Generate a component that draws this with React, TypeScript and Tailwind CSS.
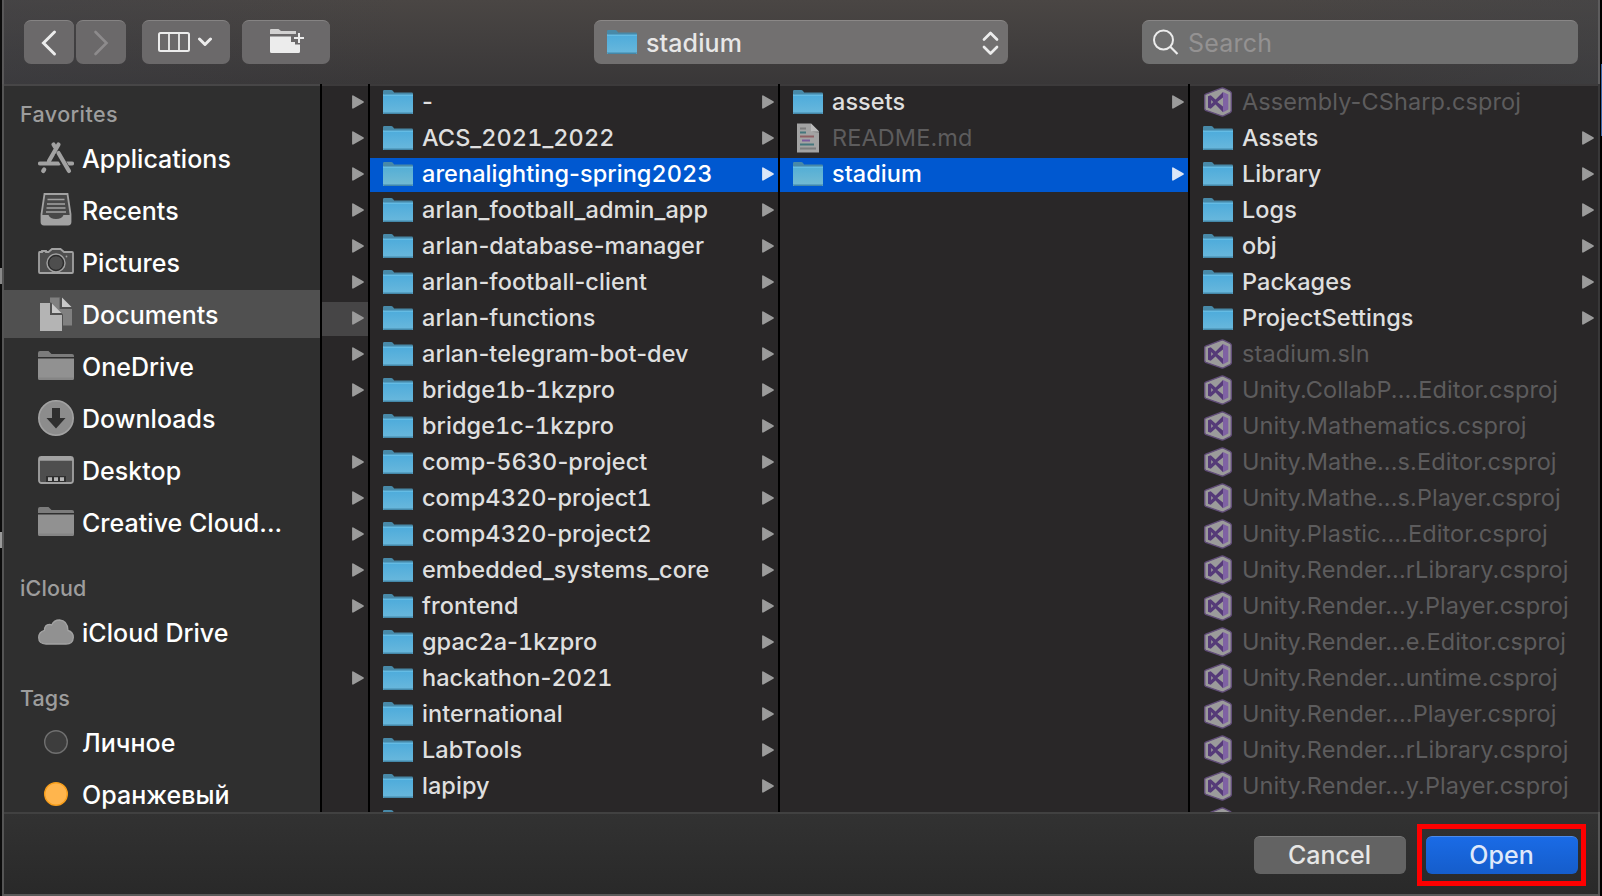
import React from "react";

const FOLDERS = [
  "-", "ACS_2021_2022", "arenalighting-spring2023", "arlan_football_admin_app", "arlan-database-manager",
  "arlan-football-client", "arlan-functions", "arlan-telegram-bot-dev", "bridge1b-1kzpro", "bridge1c-1kzpro",
  "comp-5630-project", "comp4320-project1", "comp4320-project2", "embedded_systems_core", "frontend",
  "gpac2a-1kzpro", "hackathon-2021", "international", "LabTools", "lapipy", "",
];

type Kind = "folder" | "doc" | "vs";
type Entry = { name: string; kind: Kind };

const STADIUM: Entry[] = [
  { name: "assets", kind: "folder" },
  { name: "README.md", kind: "doc" },
  { name: "stadium", kind: "folder" },
];

const PROJECT: Entry[] = [
  { name: "Assembly-CSharp.csproj", kind: "vs" },
  { name: "Assets", kind: "folder" },
  { name: "Library", kind: "folder" },
  { name: "Logs", kind: "folder" },
  { name: "obj", kind: "folder" },
  { name: "Packages", kind: "folder" },
  { name: "ProjectSettings", kind: "folder" },
  { name: "stadium.sln", kind: "vs" },
  { name: "Unity.CollabP....Editor.csproj", kind: "vs" },
  { name: "Unity.Mathematics.csproj", kind: "vs" },
  { name: "Unity.Mathe...s.Editor.csproj", kind: "vs" },
  { name: "Unity.Mathe...s.Player.csproj", kind: "vs" },
  { name: "Unity.Plastic....Editor.csproj", kind: "vs" },
  { name: "Unity.Render...rLibrary.csproj", kind: "vs" },
  { name: "Unity.Render...y.Player.csproj", kind: "vs" },
  { name: "Unity.Render...e.Editor.csproj", kind: "vs" },
  { name: "Unity.Render...untime.csproj", kind: "vs" },
  { name: "Unity.Render....Player.csproj", kind: "vs" },
  { name: "Unity.Render...rLibrary.csproj", kind: "vs" },
  { name: "Unity.Render...y.Player.csproj", kind: "vs" },
  { name: "Unity.Render...ditor.csproj", kind: "vs" },
];

const NARROW = [1, 1, 1, 1, 1, 1, 1, 1, 1, 0, 1, 1, 1, 1, 1, 0, 1, 0, 0, 0, 0];

function Defs() {
  return (
    <svg className="absolute h-0 w-0" aria-hidden="true">
      <defs>
        <linearGradient id="front" x1="0" y1="0" x2="0" y2="1">
          <stop offset="0" stopColor="#4dabdb" />
          <stop offset="1" stopColor="#6ab8dc" />
        </linearGradient>
        <linearGradient id="frontSel" x1="0" y1="0" x2="0" y2="1">
          <stop offset="0" stopColor="#53aed6" />
          <stop offset="1" stopColor="#74bbd2" />
        </linearGradient>
      </defs>
    </svg>
  );
}

function Folder({ selected = false }: { selected?: boolean }) {
  return (
    <svg className="h-[26px] w-[30px] shrink-0" viewBox="0 0 30 26">
      <path d="M0 1.2Q0 0 1.2 0H8.2Q9.2 0 9.8 .8L11.2 2.6H28.8Q30 2.6 30 3.8V8H0Z" fill="#4889a8" />
      <path d="M.8 4H29.8V5H.8Z" fill="#33657e" />
      <path d="M0 4.6H30V22.9Q30 24 28.9 24H1.1Q0 24 0 22.9Z" fill={selected ? "url(#frontSel)" : "url(#front)"} />
      <path d="M0 4.6H30V5.6H0Z" fill="#74c6ea" />
      <path d="M0 22H30V22.9Q30 24 28.9 24H1.1Q0 24 0 22.9Z" fill="#559fc2" />
      <path d="M.6 23.3H29.4L28.9 24H1.1Z" fill="#3f7f9f" />
    </svg>
  );
}

function DocIcon() {
  return (
    <svg className="mb-0.5 ml-1 mr-1 h-[30px] w-[22px] shrink-0" viewBox="0 0 22 30">
      <path d="M0 .5H14L22 8.500V29.500H0Z" fill="#a3a3a3" />
      <path d="M14 .5 22 8.500H14Z" fill="#bcbcbc" />
      <path d="M14 8.500H22V10Z" fill="#858585" />
      <g strokeWidth="2" fill="none">
        <path d="M3 5.500H9M3 25.500H19" stroke="#7d7d7d" />
        <path d="M3 9.500H9M3 21.500H17" stroke="#45767c" />
        <path d="M3 13.500H17" stroke="#8e5f63" />
        <path d="M5 17.500H13" stroke="#7a5c9c" />
      </g>
    </svg>
  );
}

function VsIcon() {
  return (
    <svg className="mb-0.5 ml-px mr-px h-[30px] w-[28px] shrink-0" viewBox="0 0 28 30">
      <path d="M1.800 7.200 17.500 1.200Q18.700.8 19.900 1.300L26 4.300Q27.300 5 27.300 6.400V23.600Q27.300 25 26 25.700L19.900 28.700Q18.700 29.200 17.500 28.800L1.800 23.300Q.7 22.800 .7 21.600V8.700Q.7 7.600 1.800 7.200Z" fill="#9b9b9b" stroke="#634f7b" strokeWidth="1.400" />
      <path d="M4 9.200 6 8.400Q6.700 8.200 7.300 8.800L19 19.300V25.200L7.200 12.900V16.900L19 5V10.700L7.300 21.300Q6.700 21.800 6 21.600L4 20.800Z" fill="#553a78" />
      <path d="M19 5 24.300 7.600V22.600L19 25.200Z" fill="#7f62a3" />
      <path d="M13.300 15 19 10.600V19.400Z" fill="#9b9b9b" />
    </svg>
  );
}

function Arrow({ selected = false }: { selected?: boolean }) {
  return (
    <svg className="mb-0.5 h-[14px] w-[12px] shrink-0" viewBox="0 0 12 14">
      <path d="M.9 1.100 11 7 .9 12.900Z" fill={selected ? "#dbe6f8" : "#9b9b9b"} stroke={selected ? "#dbe6f8" : "#9b9b9b"} strokeWidth="1.600" strokeLinejoin="round" />
    </svg>
  );
}

function FileName({ name }: { name: string }) {
  return (
    <>
      {name.split(/(\d+)/).map((part, i) => (i % 2 ? <span key={i} className="tabular-nums">{part}</span> : part))}
    </>
  );
}

function Row({ entry, selected = false }: { entry: Entry; selected?: boolean }) {
  const isFolder = entry.kind === "folder";
  return (
    <div className={`flex h-[34px] shrink-0 items-center pl-[13px] pr-1 ${selected ? "bg-[#0058d0]" : ""}`}>
      {isFolder && <Folder selected={selected} />}
      {entry.kind === "doc" && <DocIcon />}
      {entry.kind === "vs" && <VsIcon />}
      <span className={`ml-[9px] flex-1 whitespace-pre pb-0.5 text-[23.5px] leading-[30px] ${selected ? "font-medium tracking-[0.05px] text-white" : isFolder ? "font-[450] tracking-[0.05px] text-[#dfdfdf]" : "tracking-[0.1px] text-[#5d5c5d]"}`}>
        <FileName name={entry.name} />
      </span>
      {isFolder && <Arrow selected={selected} />}
    </div>
  );
}

function SideIcon({ name }: { name: string }) {
  const c = "#a2a2a2";
  return (
    <svg className="h-[36px] w-[36px] shrink-0" viewBox="0 0 36 36">
      {name === "Applications" && (
        <g stroke={c} strokeWidth="4.200" strokeLinecap="round" fill="none">
          <path d="M20.500 4.500 11 21" />
          <path d="M2 23.500H21" />
          <path d="M28 23.500H34" />
          <path d="M6.200 29.500 5.200 31" />
          <path d="M15.500 4.500 17 7" />
          <path d="M19.500 13 29 29" stroke="#2f2f2f" strokeWidth="6.500" strokeLinecap="butt" />
          <path d="M20.500 13 31 31" />
        </g>
      )}
      {name === "Recents" && (
        <g>
          <path d="M6.500 2H29.500L32.500 22V30Q32.500 32.500 30 32.500H6Q3.500 32.500 3.500 30V22Z" fill="#484848" stroke={c} strokeWidth="1.800" />
          <path d="M9.500 7.500H26.500M9 12H27M8.500 16H27.500M8 20H28" stroke={c} strokeWidth="1.700" />
          <path d="M3.500 23H10.500Q12 27 18 27T25.500 23H32.500V30Q32.500 32.500 30 32.500H6Q3.500 32.500 3.500 30Z" fill={c} />
        </g>
      )}
      {name === "Pictures" && (
        <g>
          <path d="M1.500 8H4V7H8V8H10.500L14 5H22.500L26 8H34Q35 8 35 9V28Q35 29 34 29H2Q1 29 1 28V9Q1 8 1.500 8Z" fill="#4e4e4e" stroke={c} strokeWidth="1.800" />
          <circle cx="18" cy="19" r="9" fill="#383838" stroke={c} strokeWidth="1.400" />
          <circle cx="18" cy="19" r="7.300" fill="#4e4e4e" stroke="#242424" strokeWidth=".9" />
          <circle cx="28.500" cy="12.500" r=".9" fill={c} />
        </g>
      )}
      {name === "Documents" && (
        <g>
          <path d="M12 1.500H22.500V11H34V29.500H12Z" fill="#808080" />
          <path d="M24 1.500 34 11.500H24Z" fill="#c9c9c9" />
          <path d="M22.500 1.500V12H34" fill="none" stroke="#505050" strokeWidth="1.800" />
          <path d="M1 6.500H13L25 18.500V36H1Z" fill="#505050" />
          <path d="M2 7H12V19H24V35H2Z" fill="#b4b4b4" />
          <path d="M14 7.500 23.500 17H14Z" fill="#c9c9c9" />
        </g>
      )}
      {name === "Folder" && (
        <g>
          <path d="M0 5Q0 3 2 3H10.500L13.500 6H34Q36 6 36 8V9H0Z" fill="#7c7c7c" />
          <path d="M0 10.500H36V30Q36 32 34 32H2Q0 32 0 30Z" fill="#919191" />
          <path d="M0 29.500H36V30Q36 32 34 32H2Q0 32 0 30Z" fill="#858585" />
        </g>
      )}
      {name === "Downloads" && (
        <g>
          <circle cx="18" cy="18" r="17.200" fill="#8c8c8c" stroke={c} strokeWidth="1.600" />
          <path d="M14 8H22V18H27.500L18 28.500 8.500 18H14Z" fill="#2f2f2f" />
        </g>
      )}
      {name === "Desktop" && (
        <g>
          <rect x="1" y="5" width="34" height="26" rx="2.500" fill="#4e4e4e" stroke={c} strokeWidth="1.800" />
          <path d="M1 5H35V8.800H1Z" fill={c} />
          <path d="M8 24H28V30H8Z" fill="#2f2f2f" />
          <path d="M10 25.200H14V29H10ZM16 25.200H20V29H16ZM22 25.200H26V29H22Z" fill="#b5b5b5" />
        </g>
      )}
      {name === "Cloud" && (
        <path d="M8 30Q.7 30 .7 23.500 .7 18 6.500 16.300 6.500 10.500 11.500 10.300 13 10.300 13.700 11 16 6 21.500 6 29.500 6.500 30 16.500 35.300 18 35.300 23.500 35 30 28 30Z" fill="#919191" stroke={c} strokeWidth="1.300" />
      )}
      {name === "Gray" && <circle cx="18" cy="18" r="11.300" fill="#3d3d3d" stroke="#707070" strokeWidth="1.400" />}
      {name === "Orange" && <circle cx="18" cy="18" r="11.300" fill="#ffb54d" stroke="#f79e1b" strokeWidth="1.400" />}
    </svg>
  );
}

function SideItem({ icon, label, selected = false }: { icon: string; label: string; selected?: boolean }) {
  return (
    <div className={`flex h-12 shrink-0 items-center pl-[34px] ${selected ? "bg-[#505050]" : ""}`}>
      <SideIcon name={icon} />
      <span className="ml-[8px] whitespace-nowrap pt-[2px] text-[25px] font-medium leading-[44px] tracking-[0.03px] text-white">{label}</span>
    </div>
  );
}

const toolButton = "flex h-[44px] items-center justify-center rounded-[7px] border-t border-[#858383] bg-[#6b696a]";
const sectionTitle = "h-[62px] shrink-0 pl-4 pt-[22px] text-[21.5px] font-medium leading-[40px] tracking-[0.1px] text-[#9d9d9d]";

export default function App() {
  return (
    <div className="flex h-[896px] w-[1602px] overflow-hidden bg-black font-['Inter','Noto_Sans',sans-serif]">
      <Defs />
      <div className="flex w-0.5 shrink-0 flex-col bg-[#0c0c0c]">
        <div className="h-[268px]" />
        <div className="h-4 bg-[#8a8a8a]" />
        <div className="h-[248px]" />
        <div className="h-4 bg-[#9a9a9a]" />
      </div>
      <div className="flex w-[1598px] shrink-0 flex-col border-b-2 border-[#5a5959] bg-[#2f2f2f]">
        <header className="flex h-[84px] shrink-0 items-start border-l-2 border-r-2 border-l-[#595859] border-r-[#5d5c5d] bg-[linear-gradient(90deg,rgba(62,64,70,0.4),rgba(62,64,70,0)_25%,rgba(62,64,70,0)_80%,rgba(66,68,72,0.4)),linear-gradient(#4a4644,#393738)] pl-5 pt-5">
          <button className={`${toolButton} w-[50px] pr-px`}>
            <svg className="h-7 w-4" viewBox="0 0 16 28"><path d="M13.500 3 2.500 14 13.500 25" fill="none" stroke="#ececec" strokeWidth="3" strokeLinecap="round" /></svg>
          </button>
          <button className={`${toolButton} ml-0.5 w-[50px]`}>
            <svg className="h-7 w-4" viewBox="0 0 16 28"><path d="M2.500 3 13.500 14 2.500 25" fill="none" stroke="#8d8b8c" strokeWidth="2.600" strokeLinecap="round" /></svg>
          </button>
          <button className={`${toolButton} ml-4 w-[88px] gap-2 pb-px pr-0.5`}>
            <svg className="h-5 w-8" viewBox="0 0 32 20"><rect x="1" y="1" width="30" height="18" rx="1.500" fill="none" stroke="#ececec" strokeWidth="2" /><path d="M11 1V19M21 1V19" stroke="#ececec" strokeWidth="1.800" /></svg>
            <svg className="h-[10px] w-[14px]" viewBox="0 0 14 10"><path d="M1.500 2 7 7.500 12.500 2" fill="none" stroke="#ececec" strokeWidth="3" strokeLinecap="round" strokeLinejoin="round" /></svg>
          </button>
          <button className={`${toolButton} ml-3 w-[88px] pl-0.5`}>
            <svg className="mb-1 h-[26px] w-9" viewBox="0 0 36 26">
              <path d="M1 2Q1 1 2 1H9.500L12 3H27V6H1Z" fill="#d2d1d1" />
              <path d="M1 8.500H22V14H26V16.500H31V23.500Q31 25 29.500 25H2.500Q1 25 1 23.500Z" fill="#ececec" />
              <path d="M24.500 10H35M30 4.500V15.500" stroke="#6b696a" strokeWidth="5" />
              <path d="M25 10H35M30 5V15" stroke="#ececec" strokeWidth="2" />
            </svg>
          </button>
          <div className="ml-[264px] flex h-[44px] w-[414px] items-center rounded-[7px] border-t border-[#8b8887] bg-[#727070] pl-[13px] pr-[9px]">
            <Folder />
            <span className="ml-[9px] flex-1 text-[25px] font-medium leading-[40px] tracking-[0.1px] text-[#e8e7e7]">stadium</span>
            <svg className="h-[26px] w-[17px]" viewBox="0 0 17 26"><path d="M2 9.500 8.500 3 15 9.500M2 17 8.500 23.500 15 17" fill="none" stroke="#ececec" strokeWidth="2.700" strokeLinecap="round" strokeLinejoin="round" /></svg>
          </div>
          <div className="ml-[134px] flex h-[44px] w-[436px] items-center rounded-[7px] border-t border-[#888686] bg-[#707070] pl-[11px]">
            <svg className="h-[27px] w-[27px]" viewBox="0 0 27 27"><circle cx="10.500" cy="11" r="9.500" fill="none" stroke="#ececec" strokeWidth="2" /><path d="M17.300 17.800 24.500 25" stroke="#ececec" strokeWidth="2.200" /></svg>
            <span className="ml-2 text-[25px] leading-[40px] tracking-[0.2px] text-[#949292]">Search</span>
          </div>
        </header>

        <main className="flex h-[728px] shrink-0 overflow-hidden bg-[#292728]">
          <nav className="flex w-[318px] shrink-0 flex-col overflow-hidden border-l-2 border-[#555555] bg-[#2f2f2f]">
            <div className="h-0.5 shrink-0 bg-[#474647]" />
            <h2 className="h-12 shrink-0 pl-4 pt-2 text-[21.5px] font-medium leading-[40px] tracking-[0.4px] text-[#9d9d9d]">Favorites</h2>
            <div className="flex shrink-0 flex-col gap-1">
              <SideItem icon="Applications" label="Applications" />
              <SideItem icon="Recents" label="Recents" />
              <SideItem icon="Pictures" label="Pictures" />
              <SideItem icon="Documents" label="Documents" selected />
              <SideItem icon="Folder" label="OneDrive" />
              <SideItem icon="Downloads" label="Downloads" />
              <SideItem icon="Desktop" label="Desktop" />
              <SideItem icon="Folder" label="Creative Cloud..." />
            </div>
            <h2 className={sectionTitle}>iCloud</h2>
            <SideItem icon="Cloud" label="iCloud Drive" />
            <h2 className={sectionTitle}>Tags</h2>
            <div className="flex shrink-0 flex-col gap-1">
              <SideItem icon="Gray" label="Личное" />
              <SideItem icon="Orange" label="Оранжевый" />
            </div>
          </nav>
          <div className="w-[50px] shrink-0 border-x-2 border-black">
            <div className="h-0.5 bg-[#3c3a3b]" />
            <div className="flex flex-col gap-0.5">
              {NARROW.map((has, i) => (
                <div key={i} className={`flex h-[34px] shrink-0 items-center justify-end pr-1 ${i === 6 ? "bg-[#464546]" : ""}`}>
                  {has ? <Arrow /> : null}
                </div>
              ))}
            </div>
          </div>
          <div className="w-[410px] shrink-0 border-r-2 border-black">
            <div className="h-0.5 bg-[#3c3a3b]" />
            <div className="flex flex-col gap-0.5">
              {FOLDERS.map((name, i) => <Row key={i} entry={{ name, kind: "folder" }} selected={i === 2} />)}
            </div>
          </div>
          <div className="w-[410px] shrink-0 border-r-2 border-black">
            <div className="h-0.5 bg-[#3c3a3b]" />
            <div className="flex flex-col gap-0.5">
              {STADIUM.map((entry, i) => <Row key={i} entry={entry} selected={i === 2} />)}
            </div>
          </div>
          <div className="w-[408px] shrink-0">
            <div className="h-0.5 bg-[#3c3a3b]" />
            <div className="flex flex-col gap-0.5">
              {PROJECT.map((entry, i) => <Row key={i} entry={entry} />)}
            </div>
          </div>
          <div className="w-0.5 shrink-0 bg-[#383738]" />
        </main>

        <footer className="flex h-[82px] shrink-0 flex-col border-x-2 border-[#555555] bg-linear-to-b from-[#323232] to-[#292929]">
          <div className="h-0.5 bg-[#414141]" />
          <div className="flex justify-end pr-3 pt-2.5">
            <button className="mr-[11px] mt-3 h-[38px] w-[152px] rounded-[6px] border-t border-[#7b7b7b] bg-[#636363] pb-0.5 pr-px text-[25px] font-medium leading-[34px] text-[#e6e6e6]">Cancel</button>
            <div className="h-[62px] w-[169px] border-[5px] border-[#fe0000] pl-1 pt-[7px]">
              <button className="h-[38px] w-[152px] rounded-[6px] border-t border-[#4d8bea] bg-linear-to-b from-[#1a6be6] to-[#155dcb] pb-0.5 pr-px text-[25px] font-medium leading-[34px] text-[#dfe9fa]">Open</button>
            </div>
          </div>
        </footer>
      </div>
      <div className="flex w-0.5 shrink-0 flex-col bg-black">
        <div className="h-16" />
        <div className="ml-px h-[72px] bg-[#3a66a8]" />
      </div>
    </div>
  );
}
